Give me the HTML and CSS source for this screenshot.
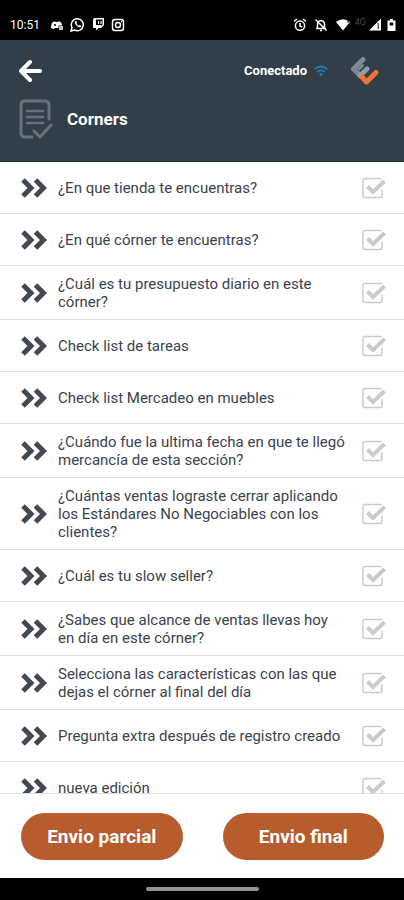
FILE: index.html
```
<!DOCTYPE html>
<html lang="es">
<head>
<meta charset="utf-8">
<meta name="viewport" content="width=device-width, initial-scale=1">
<title>Corners</title>
<link rel="stylesheet" href="styles.css">
</head>
<body>
<svg class="defs" aria-hidden="true">
  <symbol id="chevrons" viewBox="0 0 26 20"><path d="M2 2l8 8-8 8M14.500 2l8 8-8 8" fill="none" stroke="currentColor" stroke-width="5"/></symbol>
  <symbol id="tick" viewBox="0 0 26 22"><path d="M21 12.500v6a2 2 0 0 1-2 2H4a2 2 0 0 1-2-2v-15a2 2 0 0 1 2-2h15q1 0 1.500.5" fill="none" stroke="currentColor" stroke-width="1.500"/><path d="M6.500 9.500l5.500 5.500L23.500 4" fill="none" stroke="currentColor" stroke-width="4"/></symbol>
</svg>
<div class="screen">
  <div class="status">
    <span class="clock">10:51</span>
    <div class="notices">
      <svg width="14" height="14" viewBox="0 0 14 14"><path d="M1 10Q1 5 3 4l2-.8.8.8h2l.8-.8 2 .8q1.200 1 1.600 3.500H8.500V10H5l-1.500 1z" fill="#fff"/><circle cx="5" cy="7" r="1" fill="#000"/><path d="M9 9h4M9 11h4" stroke="#fff" stroke-width="1.300"/></svg>
      <svg width="15" height="15" viewBox="0 0 15 15"><path d="M1 14l1-3.500a6 6 0 1 1 2.500 2.500z" fill="none" stroke="#fff" stroke-width="1.500"/><path d="M5.200 4.200Q4 5.500 6 8t4.500 2.500l.8-1.500-1.800-1-1 .8Q7 8 6.500 6.500l.6-.8-.8-1.700z" fill="#fff"/></svg>
      <svg width="14" height="15" viewBox="0 0 14 15"><path d="M3 1h10v7l-3 3H7.500L5 13.500V11H2V3z" fill="#fff"/><path d="M5 2.500h6.500v5L10 9H5z" fill="#000"/><path d="M7.500 4v3M10 4v3M5 8.500h5" stroke="#fff" stroke-width="1.200"/></svg>
      <svg width="14" height="14" viewBox="0 0 14 14" fill="none" stroke="#fff"><rect x="1.500" y="1.500" width="11" height="11" rx="2.500" stroke-width="1.500"/><circle cx="7" cy="7" r="2.500" stroke-width="1.500"/><path d="M10 3.700h1" stroke-width="1.200"/></svg>
    </div>
    <div class="system">
      <svg width="14" height="14" viewBox="0 0 14 14" fill="none" stroke="#fff" stroke-width="1.500"><circle cx="7" cy="7.700" r="4.600"/><path d="M7 5v3l2 1M1 3.500L4 1M13 3.500L10 1"/></svg>
      <svg class="bell" width="14" height="14" viewBox="0 0 14 14" fill="none" stroke="#fff" stroke-width="1.500"><path d="M3.500 10V6.500Q3.500 3 7 2.500q3.500.5 3.500 4V10M2 10.500h10M6 12.500h2M1.500 1.500l11 11"/></svg>
      <svg class="signal" width="16" height="13" viewBox="0 0 16 13"><path d="M1 4Q8-1.500 15 4l-7 8.500z" fill="#fff"/><path d="M13 1v4" stroke="#000"/></svg>
      <span class="network">4G</span>
      <svg width="14" height="13" viewBox="0 0 14 13"><path d="M1 12.500L13 .5v12z" fill="#fff"/><path d="M10.200 5v6" stroke="#333" stroke-width="1.200"/></svg>
      <svg class="battery" width="9" height="14" viewBox="0 0 9 14"><path d="M3 1h3v1.500h2.500V13h-8V2.500H3z" fill="#fff"/><path d="M2.700 4.500h3.600v3H2.700z" fill="#111"/></svg>
    </div>
  </div>
  <header class="header">
    <div class="bar">
      <button class="back" type="button" aria-label="Volver">
        <svg width="24" height="24" viewBox="0 0 24 24" fill="none" stroke="#fff" stroke-width="4" stroke-linecap="round" stroke-linejoin="round"><path d="M11 3L2 12l9 9M2 12h19"/></svg>
      </button>
      <span class="online">Conectado</span>
      <svg class="wifi" width="14" height="12" viewBox="0 0 14 12" fill="none" stroke="#2180b5" stroke-width="1.700"><path d="M.8 4.200q6.200-5.400 12.400 0M3.200 7q3.800-3.400 7.600 0"/><circle cx="7" cy="9.500" r="1.500" fill="#2180b5" stroke="none"/></svg>
      <svg class="logo" width="30" height="30" viewBox="0 0 30 30" fill="none" stroke-linecap="round" stroke-linejoin="round"><path d="M13 3.500L3.500 13l7 7" stroke="#7d8a95" stroke-width="5"/><path d="M10 19.500l7-6.500" stroke="#929da6" stroke-width="5"/><path d="M9 13l3.500-3.500" stroke="#7d8a95" stroke-width="3"/><path d="M12 21l4.500 5L26 16.500" stroke="#ef7436" stroke-width="5"/></svg>
    </div>
    <div class="heading">
      <svg width="34" height="40" viewBox="0 0 34 40" fill="none" stroke="#66727b" stroke-width="3" stroke-linecap="round" stroke-linejoin="round"><path d="M30 20V6q0-4-4-4H6Q2 2 2 6v28q0 4 4 4h7"/><path d="M8 12h16M8 18h16M8 24h16" stroke-width="2.500"/><path d="M15 32l6 6 11-12"/></svg>
      <h1>Corners</h1>
    </div>
  </header>
  <main class="list-area">
    <ul class="list">
      <li><svg class="chevrons"><use href="#chevrons"/></svg><label for="q1">¿En que tienda te encuentras?</label><span class="tick"><input type="checkbox" id="q1"><svg><use href="#tick"/></svg></span></li>
      <li><svg class="chevrons"><use href="#chevrons"/></svg><label for="q2">¿En qué córner te encuentras?</label><span class="tick"><input type="checkbox" id="q2"><svg><use href="#tick"/></svg></span></li>
      <li><svg class="chevrons"><use href="#chevrons"/></svg><label for="q3">¿Cuál es tu presupuesto diario en este córner?</label><span class="tick"><input type="checkbox" id="q3"><svg><use href="#tick"/></svg></span></li>
      <li><svg class="chevrons"><use href="#chevrons"/></svg><label for="q4">Check list de tareas</label><span class="tick"><input type="checkbox" id="q4"><svg><use href="#tick"/></svg></span></li>
      <li><svg class="chevrons"><use href="#chevrons"/></svg><label for="q5">Check list Mercadeo en muebles</label><span class="tick"><input type="checkbox" id="q5"><svg><use href="#tick"/></svg></span></li>
      <li><svg class="chevrons"><use href="#chevrons"/></svg><label for="q6">¿Cuándo fue la ultima fecha en que te llegó mercancía de esta sección?</label><span class="tick"><input type="checkbox" id="q6"><svg><use href="#tick"/></svg></span></li>
      <li><svg class="chevrons"><use href="#chevrons"/></svg><label for="q7">¿Cuántas ventas lograste cerrar aplicando los Estándares No Negociables con los clientes?</label><span class="tick"><input type="checkbox" id="q7"><svg><use href="#tick"/></svg></span></li>
      <li><svg class="chevrons"><use href="#chevrons"/></svg><label for="q8">¿Cuál es tu slow seller?</label><span class="tick"><input type="checkbox" id="q8"><svg><use href="#tick"/></svg></span></li>
      <li><svg class="chevrons"><use href="#chevrons"/></svg><label for="q9">¿Sabes que alcance de ventas llevas hoy en día en este córner?</label><span class="tick"><input type="checkbox" id="q9"><svg><use href="#tick"/></svg></span></li>
      <li><svg class="chevrons"><use href="#chevrons"/></svg><label for="q10">Selecciona las características con las que dejas el córner al final del día</label><span class="tick"><input type="checkbox" id="q10"><svg><use href="#tick"/></svg></span></li>
      <li><svg class="chevrons"><use href="#chevrons"/></svg><label for="q11">Pregunta extra después de registro creado</label><span class="tick"><input type="checkbox" id="q11"><svg><use href="#tick"/></svg></span></li>
      <li><svg class="chevrons"><use href="#chevrons"/></svg><label for="q12">nueva edición</label><span class="tick"><input type="checkbox" id="q12"><svg><use href="#tick"/></svg></span></li>
    </ul>
  </main>
  <footer class="actions">
    <button type="button">Envio parcial</button>
    <button type="button">Envio final</button>
  </footer>
  <div class="navbar"><span class="handle"></span></div>
</div>
</body>
</html>
```
FILE: styles.css
```
* { box-sizing: border-box; }

body {
  margin: 0;
  background: #fff;
  color: #3c424e;
  font-family: Roboto, "Noto Sans", sans-serif;
}

button { padding: 0; border: 0; background: none; font: inherit; cursor: pointer; }
svg { display: block; flex: none; }
.defs { position: absolute; width: 0; height: 0; }

.screen { display: flex; flex-direction: column; height: 100vh; }

.status {
  display: flex;
  align-items: center;
  flex: none;
  padding: 9px 8px 0 10px;
  height: 40px;
  background: #000;
  color: #fff;
}
.clock { width: 40px; font-size: 12px; }
.notices { display: flex; align-items: center; gap: 6px; }
.system { display: flex; align-items: center; margin-left: auto; }
.bell { margin-left: 7px; }
.signal { margin-left: 7px; }
.network { margin: -6px 2px 0 4px; color: #484848; font-size: 9px; }
.battery { margin-left: 5px; }

.header {
  flex: none;
  padding: 16px 24px 22px 19px;
  border-bottom: 1px solid #28303a;
  background: #323e48;
  color: #fff;
}
.bar { display: flex; align-items: center; }
.back { margin-right: auto; }
.online { font-size: 13px; font-weight: 700; line-height: 18px; }
.wifi { margin: 0 22px 0 7px; }
.heading { display: flex; align-items: center; gap: 14px; margin-top: 13px; }
.heading h1 { margin: 0; font-size: 17px; font-weight: 700; line-height: 24px; }

.list-area { flex: 1; min-height: 0; overflow: hidden; }
.list { margin: 0; padding: 0; list-style: none; }
.list li {
  display: flex;
  align-items: center;
  min-height: 52px;
  padding: 9px 17px 8px 21px;
  border-bottom: 1px solid #dedede;
}
.chevrons { width: 26px; height: 20px; margin-right: 11px; color: #444852; }
.list label { flex: 1; margin-right: 14px; font-size: 15px; line-height: 18px; }
.tick { position: relative; flex: none; width: 26px; height: 22px; color: #cbcbcb; }
.tick input { appearance: none; display: block; width: 100%; height: 100%; margin: 0; }
.tick svg { position: absolute; inset: 0; width: 26px; height: 22px; pointer-events: none; }

.actions {
  display: flex;
  gap: 40px;
  flex: none;
  padding: 19px 20px 18px 21px;
  border-top: 1px solid #e0e0e0;
}
.actions button {
  flex: 1;
  height: 47px;
  border-radius: 24px;
  background: #b75d2d;
  color: #fff;
  font-size: 19px;
  font-weight: 700;
}

.navbar { display: flex; flex: none; justify-content: center; padding-top: 9px; height: 22px; background: #000; }
.handle { width: 113px; height: 4px; border-radius: 2px; background: #929292; }
```
